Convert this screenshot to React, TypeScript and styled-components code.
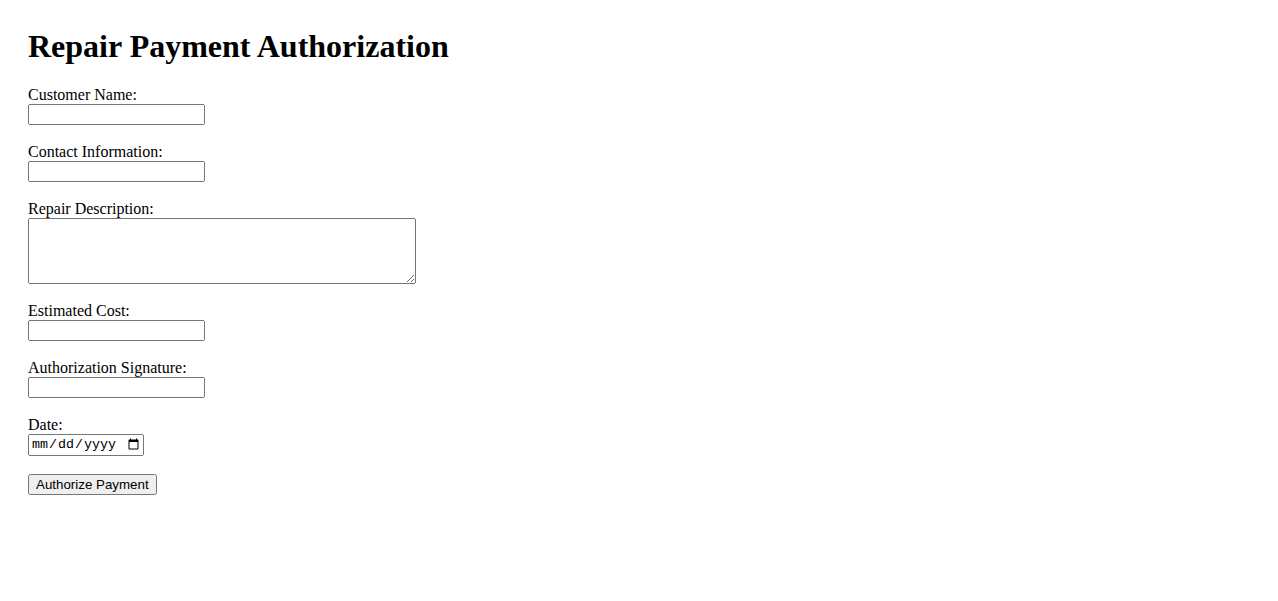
import styled, { createGlobalStyle } from "styled-components"

const GlobalStyle = createGlobalStyle`
  body {
    margin: 8px;
    padding: 20px;
    font-family: "Liberation Serif", "Times New Roman", serif;
    font-size: 16px;
    color: #000;
    background: #fff;
  }
`

const Title = styled.h1`
  font-size: 32px;
  font-weight: bold;
  margin: 0 0 21px;
`

const Field = styled.div`
  margin-bottom: 18px;
`

const Label = styled.label`
  display: block;
`

const TextInput = styled.input`
  font-family: "Liberation Sans", Arial, sans-serif;
  font-size: 13.33px;
  width: 177px;
  height: 21px;
  box-sizing: border-box;
`

const TextArea = styled.textarea`
  font-family: "Liberation Mono", monospace;
  font-size: 13.33px;
  width: 388px;
  height: 66px;
  box-sizing: border-box;
  vertical-align: bottom;
`

const DateInput = styled.input`
  font-family: "Liberation Mono", monospace;
  font-size: 13.33px;
  width: 116px;
  height: 22px;
  box-sizing: border-box;
`

const Button = styled.button`
  font-family: "Liberation Sans", Arial, sans-serif;
  font-size: 13.33px;
  height: 21px;
  padding: 1px 6px;
`

const App = () => {
  return (
    <>
      <GlobalStyle />
      <Title>Repair Payment Authorization</Title>
      <form onSubmit={(e) => e.preventDefault()}>
        <Field>
          <Label htmlFor="name">Customer Name:</Label>
          <TextInput id="name" type="text" />
        </Field>
        <Field>
          <Label htmlFor="contact">Contact Information:</Label>
          <TextInput id="contact" type="text" />
        </Field>
        <Field>
          <Label htmlFor="desc">Repair Description:</Label>
          <TextArea id="desc" />
        </Field>
        <Field>
          <Label htmlFor="cost">Estimated Cost:</Label>
          <TextInput id="cost" type="text" />
        </Field>
        <Field>
          <Label htmlFor="sig">Authorization Signature:</Label>
          <TextInput id="sig" type="text" />
        </Field>
        <Field>
          <Label htmlFor="date">Date:</Label>
          <DateInput id="date" type="date" />
        </Field>
        <Button type="submit">Authorize Payment</Button>
      </form>
    </>
  )
}

export default App
